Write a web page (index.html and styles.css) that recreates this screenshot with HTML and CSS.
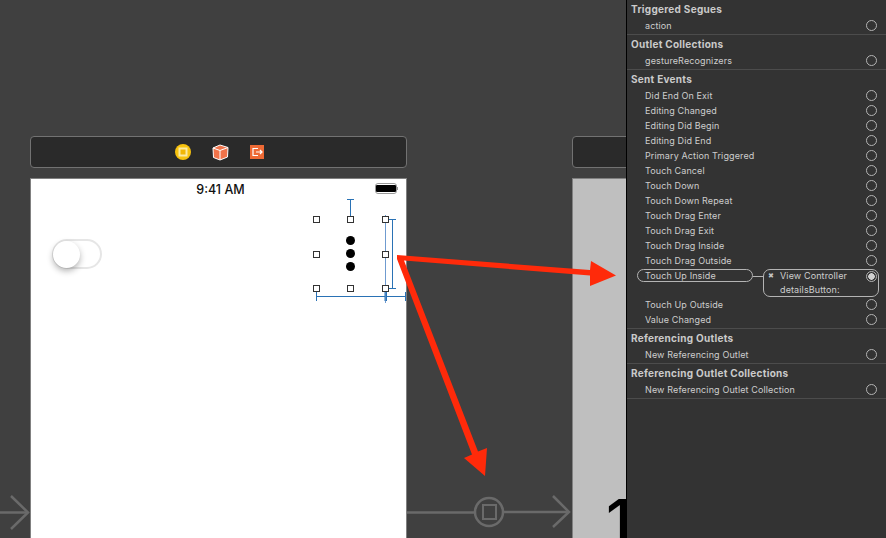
FILE: index.html
```html
<!DOCTYPE html>
<html lang="en">
<head>
    <meta charset="UTF-8">
    <title>Storyboard</title>
    <link rel="stylesheet" href="styles.css">
</head>
<body>
    <div class="canvas">
        <div class="toolbar toolbar-one">
            <svg class="bar-icon" width="16" height="16" viewBox="0 0 16 16">
                <circle cx="8" cy="8" r="8" fill="#f7c20e"/>
                <rect x="3.5" y="3.5" width="9" height="9" fill="#fbe9a0"/>
                <rect x="5.5" y="5.5" width="5" height="5" fill="#f2b705"/>
            </svg>
            <svg class="bar-icon" width="17" height="17" viewBox="0 0 17 17">
                <path d="M1 4 L8 1 L16 3.5 L15.5 13 L8 16 L1.5 13.5 Z" fill="#f0734a" stroke="#fff" stroke-width="1"/>
                <path d="M1 4 L8 6.5 L16 3.5 M8 6.5 L8 16" fill="none" stroke="#fff" stroke-width="1"/>
            </svg>
            <svg class="bar-icon" width="14" height="14" viewBox="0 0 14 14">
                <rect width="14" height="14" fill="#ee6a35"/>
                <path d="M8 3.5 H3 V10.5 H8 M6 7 H12 M10 5 L12 7 L10 9" fill="none" stroke="#fff" stroke-width="1.2"/>
            </svg>
        </div>
        <div class="toolbar toolbar-two"></div>

        <div class="scene scene-one">
            <div class="status-time">9:41 AM</div>
            <div class="battery"><span></span></div>
            <div class="switch"><span></span></div>
            <div class="dots"><i></i><i></i><i></i></div>
        </div>
        <div class="scene scene-two"><span class="big-one">1</span></div>

        <svg class="overlay" width="886" height="538" viewBox="0 0 886 538">
            <g fill="none" stroke="#6a6a6a" stroke-width="2.5">
                <path d="M0 512.500 H28"/>
                <path d="M11 496 L28 512.500 L11 529"/>
                <path d="M407 512.500 H475"/>
                <path d="M503 512 H569"/>
                <path d="M553 496 L569 512 L553 527"/>
                <circle cx="489" cy="512" r="14"/>
                <rect x="483" y="505" width="13" height="14" stroke-width="2"/>
            </g>
            <g fill="none" stroke="#2a72b5" stroke-width="1">
                <path d="M350.500 199 V219 M347 199.500 H354"/>
                <path d="M392.500 220 V288 M389 219.500 H396 M389 288.500 H396"/>
                <path d="M316 296.500 H406 M316.500 292 V301 M405.500 292 V301"/>
                <path d="M385.500 215 V303" stroke="#6f9bd0"/>
                <path d="M385 292 V301 M386.500 292 V301"/>
            </g>
            <g class="handles">
                <rect x="313.500" y="216.500" width="6" height="6"/>
                <rect x="347.500" y="216.500" width="6" height="6"/>
                <rect x="382.500" y="216.500" width="6" height="6"/>
                <rect x="313.500" y="251.500" width="6" height="6"/>
                <rect x="382.500" y="251.500" width="6" height="6"/>
                <rect x="313.500" y="285.500" width="6" height="6"/>
                <rect x="347.500" y="285.500" width="6" height="6"/>
                <rect x="382.500" y="285.500" width="6" height="6"/>
            </g>
            <path fill="#ff2a0a" d="M397 255 L590 270 L591 261 L616 275.500 L590 286 L590 275.500 L404 260.500 L478 451.500 L487 448 L485 476 L464 458 L472 454.500 L397 259 Z"/>
        </svg>

        <aside class="panel">
            <section class="group">
                <h3>Triggered Segues</h3>
                <div class="row">action<i class="dot"></i></div>
            </section>
            <section class="group">
                <h3>Outlet Collections</h3>
                <div class="row">gestureRecognizers<i class="dot"></i></div>
            </section>
            <section class="group">
                <h3>Sent Events</h3>
                <div class="row">Did End On Exit<i class="dot"></i></div>
                <div class="row">Editing Changed<i class="dot"></i></div>
                <div class="row">Editing Did Begin<i class="dot"></i></div>
                <div class="row">Editing Did End<i class="dot"></i></div>
                <div class="row">Primary Action Triggered<i class="dot"></i></div>
                <div class="row">Touch Cancel<i class="dot"></i></div>
                <div class="row">Touch Down<i class="dot"></i></div>
                <div class="row">Touch Down Repeat<i class="dot"></i></div>
                <div class="row">Touch Drag Enter<i class="dot"></i></div>
                <div class="row">Touch Drag Exit<i class="dot"></i></div>
                <div class="row">Touch Drag Inside<i class="dot"></i></div>
                <div class="row">Touch Drag Outside<i class="dot"></i></div>
                <div class="row row-connected">
                    <span class="event-pill">Touch Up Inside</span>
                    <span class="pill-link"></span>
                    <div class="target-box">
                        <span class="target-x">✖</span>
                        <span class="target-text">View Controller<br>detailsButton:</span>
                        <i class="dot dot-on"></i>
                    </div>
                </div>
                <div class="row">Touch Up Outside<i class="dot"></i></div>
                <div class="row">Value Changed<i class="dot"></i></div>
            </section>
            <section class="group">
                <h3>Referencing Outlets</h3>
                <div class="row">New Referencing Outlet<i class="dot"></i></div>
            </section>
            <section class="group">
                <h3>Referencing Outlet Collections</h3>
                <div class="row">New Referencing Outlet Collection<i class="dot"></i></div>
            </section>
        </aside>
    </div>
</body>
</html>
```
FILE: styles.css
```css
body {
    margin: 0;
    font-family: "Inter", "Liberation Sans", sans-serif;
    background-color: #404040;
}

.canvas {
    position: relative;
    width: 886px;
    height: 538px;
    overflow: hidden;
    background-color: #404040;
}

.toolbar {
    position: absolute;
    top: 136px;
    height: 30px;
    padding-left: 2px;
    background-color: #2a2a2a;
    border: 1px solid #727272;
    border-radius: 4px;
    display: flex;
    align-items: center;
    justify-content: center;
    gap: 21px;
}

.toolbar-one {
    left: 30px;
    width: 373px;
}

.toolbar-two {
    left: 572px;
    width: 80px;
}

.scene {
    position: absolute;
    top: 178px;
    height: 360px;
    border: 1px solid #808080;
    border-bottom: 0;
    overflow: hidden;
}

.scene-one {
    left: 30px;
    width: 375px;
    background-color: #fff;
}

.scene-two {
    left: 572px;
    width: 80px;
    background-color: #bfbfbf;
}

.big-one {
    position: absolute;
    left: 33px;
    top: 307px;
    font-size: 62px;
    line-height: 72px;
    font-weight: 500;
    color: #000;
}

.status-time {
    position: absolute;
    top: 3px;
    left: 2px;
    width: 100%;
    text-align: center;
    font-size: 12.500px;
    line-height: 15px;
    font-weight: 500;
    color: #111;
}

.battery {
    position: absolute;
    left: 344px;
    top: 4px;
    width: 20px;
    height: 7px;
    padding: 1px 0;
    border: 1px solid #999;
    border-radius: 3px;
}

.battery span {
    display: block;
    width: 100%;
    height: 100%;
    background-color: #000;
    border-radius: 1px;
}

.battery::after {
    content: "";
    position: absolute;
    left: 21px;
    top: 3px;
    width: 1px;
    height: 3px;
    background-color: #999;
}

.switch {
    position: absolute;
    left: 21px;
    top: 60px;
    width: 46px;
    height: 26px;
    border: 2px solid #e6e6e6;
    border-radius: 16px;
}

.switch span {
    position: absolute;
    left: -1px;
    top: 0;
    width: 27px;
    height: 27px;
    background-color: #fff;
    border-radius: 50%;
    box-shadow: 0 3px 6px rgba(0, 0, 0, 0.3);
}

.dots {
    position: absolute;
    left: 315px;
    top: 57px;
    display: flex;
    flex-direction: column;
    gap: 4px;
}

.dots i {
    display: block;
    width: 9px;
    height: 9px;
    border-radius: 50%;
    background-color: #000;
}

.overlay {
    position: absolute;
    left: 0;
    top: 0;
}

.handles rect {
    fill: #fff;
    stroke: #333;
    stroke-width: 1;
}

.panel {
    position: absolute;
    left: 626px;
    top: 0;
    width: 259px;
    height: 538px;
    border-left: 1px solid #000;
    background-color: #333;
    font-size: 9px;
    letter-spacing: 0.12px;
    color: #cecece;
}

.group {
    border-bottom: 1px solid #4c4c4c;
    padding: 2px 0 1px;
}

.group h3 {
    margin: 0 0 1px;
    padding-left: 4px;
    font-size: 10px;
    letter-spacing: 0.28px;
    line-height: 15px;
    font-weight: 700;
    color: #cacaca;
}

.row {
    position: relative;
    height: 15px;
    line-height: 15px;
    padding-left: 18px;
}

.dot {
    position: absolute;
    left: 239px;
    top: 2px;
    width: 9px;
    height: 9px;
    border: 1px solid #b4b4b4;
    border-radius: 50%;
}

.row-connected {
    height: 29px;
}

.event-pill {
    position: absolute;
    left: 10px;
    top: 1px;
    width: 107px;
    height: 11px;
    line-height: 12px;
    padding-left: 7px;
    border: 1px solid #b4b4b4;
    border-radius: 7px;
}

.pill-link {
    position: absolute;
    left: 126px;
    top: 8px;
    width: 10px;
    border-top: 1px solid #b4b4b4;
}

.target-box {
    position: absolute;
    left: 136px;
    top: 1px;
    width: 114px;
    height: 26px;
    border: 1px solid #b4b4b4;
    border-radius: 7px;
}

.target-x {
    position: absolute;
    left: 4px;
    top: 0;
    line-height: 12px;
    font-size: 7px;
    color: #c4c4c4;
}

.target-text {
    position: absolute;
    left: 16px;
    top: -1.500px;
    line-height: 14.500px;
}

.dot-on {
    left: 102px;
    top: 0.500px;
    background: radial-gradient(circle, #d0d0d0 0 3px, transparent 3.500px);
}
```
